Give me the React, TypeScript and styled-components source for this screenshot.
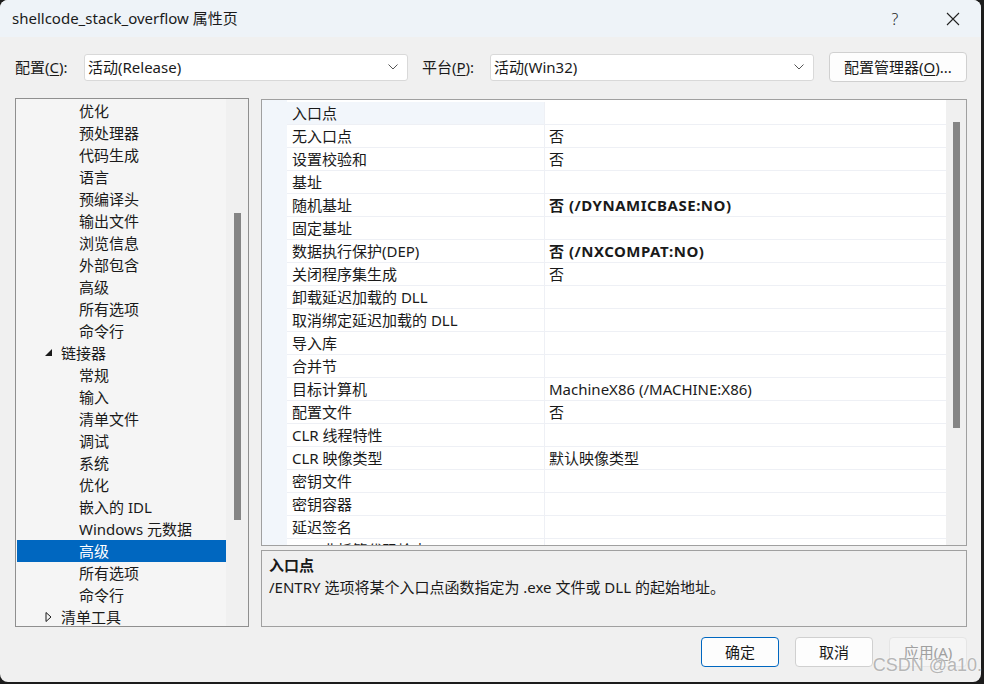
import React from "react";
import styled, { createGlobalStyle } from "styled-components";

const Global = createGlobalStyle`
  html, body { margin: 0; padding: 0; background: #1c1c1c; }
  body { width: 984px; height: 684px; overflow: hidden; }
  * { box-sizing: border-box; }
`;

const FONT = `"Noto Sans", "Noto Sans CJK SC", sans-serif`;

const Screen = styled.div`
  position: relative;
  width: 984px;
  height: 684px;
`;

const Window = styled.div`
  width: 981px;
  height: 682px;
  background: #f0f0f0;
  border-radius: 8px;
  overflow: hidden;
  display: flex;
  flex-direction: column;
  font-family: ${FONT};
  color: #1a1a1a;
`;

const TitleBar = styled.div`
  height: 37px;
  flex: 0 0 37px;
  background: #eef3f8;
  display: flex;
  align-items: center;
  padding-left: 12px;
  padding-right: 10px;
  font-size: 15px;
`;

const Title = styled.div`
  flex: 1;
  line-height: 20px;
  margin-top: -2px;
`;

const TitleButton = styled.div<{ $w: number; $gap?: number }>`
  width: ${(p) => p.$w}px;
  margin-right: ${(p) => p.$gap ?? 0}px;
  height: 37px;
  display: flex;
  align-items: center;
  justify-content: center;
  font-size: 16px;
  font-weight: 300;
  color: #222;
`;

const Body = styled.div`
  flex: 1;
  display: flex;
  flex-direction: column;
  padding: 15px 14px 0 15px;
`;

const ConfigRow = styled.div`
  display: flex;
  align-items: center;
  height: 30px;
`;

const Label = styled.div<{ $w: number }>`
  width: ${(p) => p.$w}px;
  font-size: 15px;
  line-height: 20px;
  u { text-decoration: underline; text-underline-offset: 2px; }
`;

const Combo = styled.div<{ $gap: number }>`
  width: 324px;
  height: 27px;
  background: #fff;
  border: 1px solid #d9d9d9;
  border-radius: 3px;
  display: flex;
  align-items: center;
  padding: 0 0 0 3px;
  font-size: 15px;
  margin-right: ${(p) => p.$gap}px;
`;

const ComboText = styled.div`
  flex: 1;
  line-height: 20px;
`;

const Chevron = styled.svg`
  width: 10px;
  height: 6px;
  margin-right: 9px;
`;

const Button = styled.div<{ $w?: number; $primary?: boolean; $disabled?: boolean }>`
  width: ${(p) => p.$w ?? 78}px;
  height: 30px;
  background: ${(p) => (p.$disabled ? "#f5f5f5" : "#fdfdfd")};
  border: 1px solid
    ${(p) => (p.$primary ? "#0067c0" : p.$disabled ? "#e5e5e5" : "#d0d0d0")};
  border-radius: 4px;
  display: flex;
  align-items: center;
  justify-content: center;
  font-size: 15px;
  line-height: 20px;
  color: ${(p) => (p.$disabled ? "#a0a0a0" : "#1a1a1a")};
  u { text-decoration: underline; text-underline-offset: 2px; }
`;

const Main = styled.div`
  margin-top: 16px;
  display: flex;
  gap: 12px;
  height: 529px;
`;

const Tree = styled.div`
  width: 234px;
  height: 529px;
  border: 1px solid #8f8f8f;
  background: #f5f5f5;
  display: flex;
  overflow: hidden;
`;

const TreeList = styled.div`
  flex: 1;
  padding-top: 1px;
  padding-left: 1px;
`;

const TreeRow = styled.div<{ $level: number; $selected?: boolean }>`
  height: 22px;
  display: flex;
  align-items: center;
  padding-left: ${(p) => (p.$level === 0 ? 27 : 62)}px;
  font-size: 15px;
  line-height: 20px;
  background: ${(p) => (p.$selected ? "#0067c0" : "transparent")};
  color: ${(p) => (p.$selected ? "#fff" : "#1a1a1a")};
  white-space: nowrap;
`;

const Expander = styled.svg`
  width: 10px;
  height: 10px;
  margin-right: 7px;
`;

const VScroll = styled.div<{ $w: number; $top: number; $h: number }>`
  width: ${(p) => p.$w}px;
  flex: 0 0 ${(p) => p.$w}px;
  background: #f0f0f0;
  position: relative;
  &::after {
    content: "";
    position: absolute;
    left: ${(p) => (p.$w - 7) / 2}px;
    width: 7px;
    top: ${(p) => p.$top}px;
    height: ${(p) => p.$h}px;
    background: #858585;
  }
`;

const RightCol = styled.div`
  flex: 1;
  display: flex;
  flex-direction: column;
  gap: 4px;
  padding-top: 1px;
`;

const Grid = styled.div`
  height: 447px;
  border: 1px solid #a0a0a0;
  background: #fff;
  display: flex;
  overflow: hidden;
`;

const Margin = styled.div`
  width: 25px;
  flex: 0 0 25px;
  background: #f2f6fb;
`;

const GridRows = styled.div`
  flex: 1;
  padding-top: 2px;
`;

const GridRow = styled.div<{ $selected?: boolean }>`
  display: grid;
  grid-template-columns: 258px 1fr;
  height: 23px;
  border-bottom: 1px solid #eef0f5;
  font-size: 15px;
  line-height: 20px;
  > div:first-child {
    background: ${(p) => (p.$selected ? "#f2f6fb" : "#fff")};
  }
`;

const NameCell = styled.div`
  padding-left: 5px;
  display: flex;
  align-items: center;
  border-right: 1px solid #eef0f5;
  white-space: nowrap;
`;

const ValueCell = styled.div<{ $bold?: boolean }>`
  padding-left: 4px;
  display: flex;
  align-items: center;
  font-weight: ${(p) => (p.$bold ? 700 : 400)};
  letter-spacing: ${(p) => (p.$bold ? "0.5px" : "0")};
  white-space: nowrap;
`;

const Desc = styled.div`
  flex: 1;
  border: 1px solid #a0a0a0;
  background: #f0f0f0;
  padding: 3px 7px;
  font-size: 15px;
  line-height: 22px;
`;

const DescTitle = styled.div`
  font-weight: 700;
`;

const Footer = styled.div`
  display: flex;
  justify-content: flex-end;
  gap: 16px;
  margin-top: 10px;
`;

const Watermark = styled.div`
  position: absolute;
  right: 2px;
  bottom: 9px;
  font-family: "Liberation Sans", sans-serif;
  font-size: 18px;
  line-height: 20px;
  color: rgba(165, 165, 165, 0.8);
  text-shadow: 0 0 2px rgba(255, 255, 255, 0.8);
  pointer-events: none;
  white-space: nowrap;
`;

type TreeItem = { text: string; level: number; expanded?: boolean; selected?: boolean };

const treeItems: TreeItem[] = [
  { text: "优化", level: 1 },
  { text: "预处理器", level: 1 },
  { text: "代码生成", level: 1 },
  { text: "语言", level: 1 },
  { text: "预编译头", level: 1 },
  { text: "输出文件", level: 1 },
  { text: "浏览信息", level: 1 },
  { text: "外部包含", level: 1 },
  { text: "高级", level: 1 },
  { text: "所有选项", level: 1 },
  { text: "命令行", level: 1 },
  { text: "链接器", level: 0, expanded: true },
  { text: "常规", level: 1 },
  { text: "输入", level: 1 },
  { text: "清单文件", level: 1 },
  { text: "调试", level: 1 },
  { text: "系统", level: 1 },
  { text: "优化", level: 1 },
  { text: "嵌入的 IDL", level: 1 },
  { text: "Windows 元数据", level: 1 },
  { text: "高级", level: 1, selected: true },
  { text: "所有选项", level: 1 },
  { text: "命令行", level: 1 },
  { text: "清单工具", level: 0, expanded: false },
];

type Prop = { name: string; value?: string; bold?: boolean; selected?: boolean };

const props: Prop[] = [
  { name: "入口点", selected: true },
  { name: "无入口点", value: "否" },
  { name: "设置校验和", value: "否" },
  { name: "基址" },
  { name: "随机基址", value: "否 (/DYNAMICBASE:NO)", bold: true },
  { name: "固定基址" },
  { name: "数据执行保护(DEP)", value: "否 (/NXCOMPAT:NO)", bold: true },
  { name: "关闭程序集生成", value: "否" },
  { name: "卸载延迟加载的 DLL" },
  { name: "取消绑定延迟加载的 DLL" },
  { name: "导入库" },
  { name: "合并节" },
  { name: "目标计算机", value: "MachineX86 (/MACHINE:X86)" },
  { name: "配置文件", value: "否" },
  { name: "CLR 线程特性" },
  { name: "CLR 映像类型", value: "默认映像类型" },
  { name: "密钥文件" },
  { name: "密钥容器" },
  { name: "延迟签名" },
  { name: "CLR 非托管代码检查" },
];

const ChevronIcon = () => (
  <Chevron viewBox="0 0 10 6">
    <path d="M0.5 0.5 L5 5 L9.5 0.5" fill="none" stroke="#555" strokeWidth="1" />
  </Chevron>
);

export default function App() {
  return (
    <Screen>
      <Global />
      <Window>
        <TitleBar>
          <Title>shellcode_stack_overflow 属性页</Title>
          <TitleButton $w={40} $gap={20}>?</TitleButton>
          <TitleButton $w={36}>
            <svg width="14" height="14" viewBox="0 0 14 14">
              <path d="M1 1 L13 13 M13 1 L1 13" stroke="#222" strokeWidth="1.1" />
            </svg>
          </TitleButton>
        </TitleBar>
        <Body>
          <ConfigRow>
            <Label $w={69}>
              配置(<u>C</u>):
            </Label>
            <Combo $gap={14}>
              <ComboText>活动(Release)</ComboText>
              <ChevronIcon />
            </Combo>
            <Label $w={68}>
              平台(<u>P</u>):
            </Label>
            <Combo $gap={15}>
              <ComboText>活动(Win32)</ComboText>
              <ChevronIcon />
            </Combo>
            <Button $w={138}>
              配置管理器(<u>O</u>)...
            </Button>
          </ConfigRow>
          <Main>
            <Tree>
              <TreeList>
                {treeItems.map((it, i) => (
                  <TreeRow key={i} $level={it.level} $selected={it.selected}>
                    {it.level === 0 &&
                      (it.expanded ? (
                        <Expander viewBox="0 0 10 10">
                          <path d="M8 1 L8 8 L1 8 Z" fill="#1a1a1a" />
                        </Expander>
                      ) : (
                        <Expander viewBox="0 0 10 10">
                          <path d="M2 0.5 L7 5 L2 9.5 Z" fill="none" stroke="#1a1a1a" strokeWidth="1" />
                        </Expander>
                      ))}
                    {it.text}
                  </TreeRow>
                ))}
              </TreeList>
              <VScroll $w={22} $top={114} $h={307} />
            </Tree>
            <RightCol>
              <Grid>
                <Margin />
                <GridRows>
                  {props.map((p, i) => (
                    <GridRow key={i} $selected={p.selected}>
                      <NameCell>{p.name}</NameCell>
                      <ValueCell $bold={p.bold}>{p.value ?? ""}</ValueCell>
                    </GridRow>
                  ))}
                </GridRows>
                <VScroll $w={20} $top={22} $h={306} />
              </Grid>
              <Desc>
                <DescTitle>入口点</DescTitle>
                <div>/ENTRY 选项将某个入口点函数指定为 .exe 文件或 DLL 的起始地址。</div>
              </Desc>
            </RightCol>
          </Main>
          <Footer>
            <Button $primary>确定</Button>
            <Button>取消</Button>
            <Button $disabled>
              应用(<u>A</u>)
            </Button>
          </Footer>
        </Body>
      </Window>
      <Watermark>CSDN @a10.</Watermark>
    </Screen>
  );
}
